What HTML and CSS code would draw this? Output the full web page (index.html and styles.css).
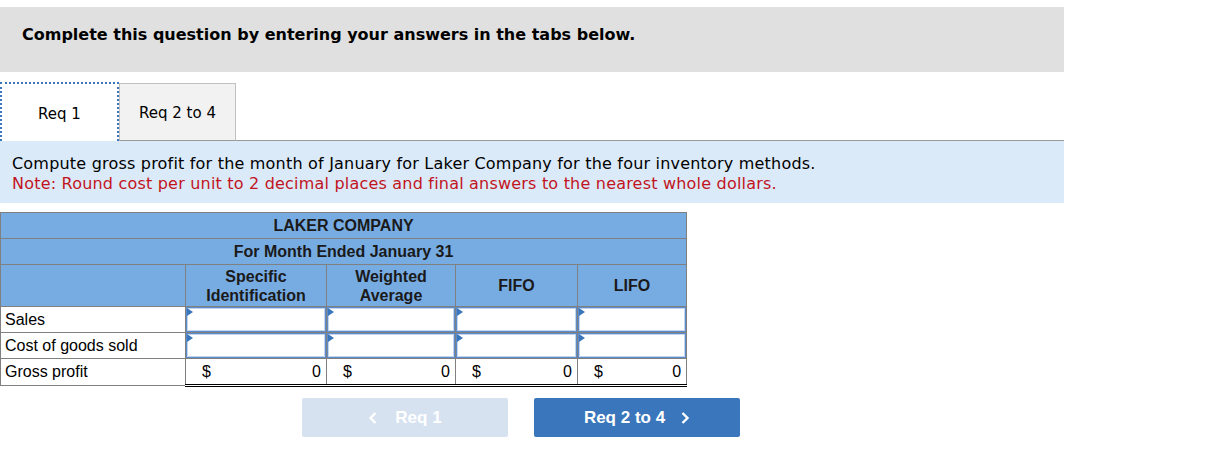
FILE: index.html
```html
<!DOCTYPE html>
<html>
<head>
<meta charset="utf-8">
<link rel="stylesheet" href="styles.css">
</head>
<body>
<div class="page">
  <div class="banner">Complete this question by entering your answers in the tabs below.</div>
  <div class="tabs">
    <div class="tab active">Req 1</div>
    <div class="tab">Req 2 to 4</div>
    <div class="tab-rest"></div>
  </div>
  <div class="info">
    <p>Compute gross profit for the month of January for Laker Company for the four inventory methods.</p>
    <p class="note">Note: Round cost per unit to 2 decimal places and final answers to the nearest whole dollars.</p>
  </div>
  <table class="sheet">
    <colgroup>
      <col class="c-label"><col class="c-spec"><col class="c-wavg"><col class="c-fifo"><col class="c-lifo">
    </colgroup>
    <tr class="hrow"><th colspan="5">LAKER COMPANY</th></tr>
    <tr class="hrow"><th colspan="5">For Month Ended January 31</th></tr>
    <tr class="colhead">
      <th></th>
      <th>Specific<br>Identification</th>
      <th>Weighted<br>Average</th>
      <th>FIFO</th>
      <th>LIFO</th>
    </tr>
    <tr class="drow">
      <td class="label">Sales</td>
      <td class="inp"><div class="box"><span class="flag"></span></div></td>
      <td class="inp"><div class="box"><span class="flag"></span></div></td>
      <td class="inp"><div class="box"><span class="flag"></span></div></td>
      <td class="inp"><div class="box"><span class="flag"></span></div></td>
    </tr>
    <tr class="drow">
      <td class="label">Cost of goods sold</td>
      <td class="inp"><div class="box"><span class="flag"></span></div></td>
      <td class="inp"><div class="box"><span class="flag"></span></div></td>
      <td class="inp"><div class="box"><span class="flag"></span></div></td>
      <td class="inp"><div class="box"><span class="flag"></span></div></td>
    </tr>
    <tr class="drow total">
      <td class="label">Gross profit</td>
      <td class="val"><span class="cur">$</span><span class="num">0</span></td>
      <td class="val"><span class="cur">$</span><span class="num">0</span></td>
      <td class="val"><span class="cur">$</span><span class="num">0</span></td>
      <td class="val"><span class="cur">$</span><span class="num">0</span></td>
    </tr>
  </table>
  <div class="nav">
    <div class="btn prev">
      <svg class="chev" width="10" height="14" viewBox="0 0 10 14"><path d="M7.5 2 L2.5 7 L7.5 12" fill="none" stroke="#fff" stroke-width="2.4"/></svg>
      <span>Req 1</span>
    </div>
    <div class="btn next">
      <span>Req 2 to 4</span>
      <svg class="chev" width="10" height="14" viewBox="0 0 10 14"><path d="M2.5 2 L7.5 7 L2.5 12" fill="none" stroke="#fff" stroke-width="2.4"/></svg>
    </div>
  </div>
</div>
</body>
</html>
```
FILE: styles.css
```css
html, body { margin: 0; padding: 0; background: #fff; }
.page { width: 1064px; padding-top: 7px; }
.banner {
  background: #e0e0e0;
  height: 65px;
  box-sizing: border-box;
  padding: 18px 0 0 22px;
  font-family: "DejaVu Sans", sans-serif;
  font-weight: bold;
  font-size: 16px;
  line-height: 20px;
  color: #000;
}
.tabs { display: flex; margin-top: 10px; height: 59px; }
.tab {
  box-sizing: border-box;
  padding-top: 2px;
  font-family: "DejaVu Sans", sans-serif;
  font-size: 15px;
  color: #000;
  display: flex; align-items: center; justify-content: center;
}
.tab.active {
  width: 119px;
  border: 2px dotted #3a76bb;
  border-bottom: none;
  background: #fff;
}
.tab:not(.active) {
  width: 117px;
  background: #f2f2f2;
  border: 1px solid #c0c0c0;
  border-bottom: 1px solid #999;
  margin-top: 1px;
}
.tab-rest { flex: 1; border-bottom: 1px solid #999; }
.info {
  background: #dbeaf8;
  padding: 13px 12px 9px;
  height: 62px;
  box-sizing: border-box;
  font-family: "DejaVu Sans", sans-serif;
  font-size: 16px;
  letter-spacing: 0.2px;
  line-height: 20px;
  color: #000;
}
.info p { margin: 0; }
.info .note { color: #c2141e; }
.sheet {
  margin-top: 9px;
  border-collapse: collapse;
  table-layout: fixed;
  width: 686px;
  font-family: "Liberation Sans", Arial, sans-serif;
  font-size: 16px;
  color: #000;
}
.c-label { width: 185px; }
.c-spec { width: 141px; }
.c-wavg { width: 129px; }
.c-fifo { width: 122px; }
.c-lifo { width: 109px; }
.sheet th, .sheet td { border: 1px solid #808080; padding: 0; }
.sheet th { background: #77ace3; font-weight: bold; color: #1a1a1a; line-height: 19px; }
.hrow th { height: 25px; }
.colhead th { height: 41px; }
.drow td { height: 25px; }
.label { padding-left: 4px !important; white-space: nowrap; }
.inp { background: #5b8bc9; }
.box {
  position: relative;
  height: 21px;
  margin: 1px;
  background: #fff;
  border: 1px solid #c3d6ee;
}
.flag {
  position: absolute; left: -1px; top: -1px;
  width: 0; height: 0;
  border-top: 4px solid transparent;
  border-bottom: 4px solid transparent;
  border-left: 6px solid #3a76bb;
}
.total .val {
  border-top: 1px solid #000;
  border-bottom: 3px double #000;
  padding: 0 5px 0 16px;
}
.val .cur { float: left; }
.val .num { float: right; }
.nav { display: flex; gap: 26px; padding-left: 302px; margin-top: 11px; }
.btn {
  width: 206px; height: 39px;
  border-radius: 2px;
  display: flex; align-items: center; justify-content: center; gap: 17px;
  font-family: "Liberation Sans", Arial, sans-serif;
  font-weight: bold; font-size: 17px; color: #fff;
}
.btn.prev { background: #d6e2f0; }
.btn.next { background: #3a76bb; gap: 15px; }
.chev { display: block; }
```
